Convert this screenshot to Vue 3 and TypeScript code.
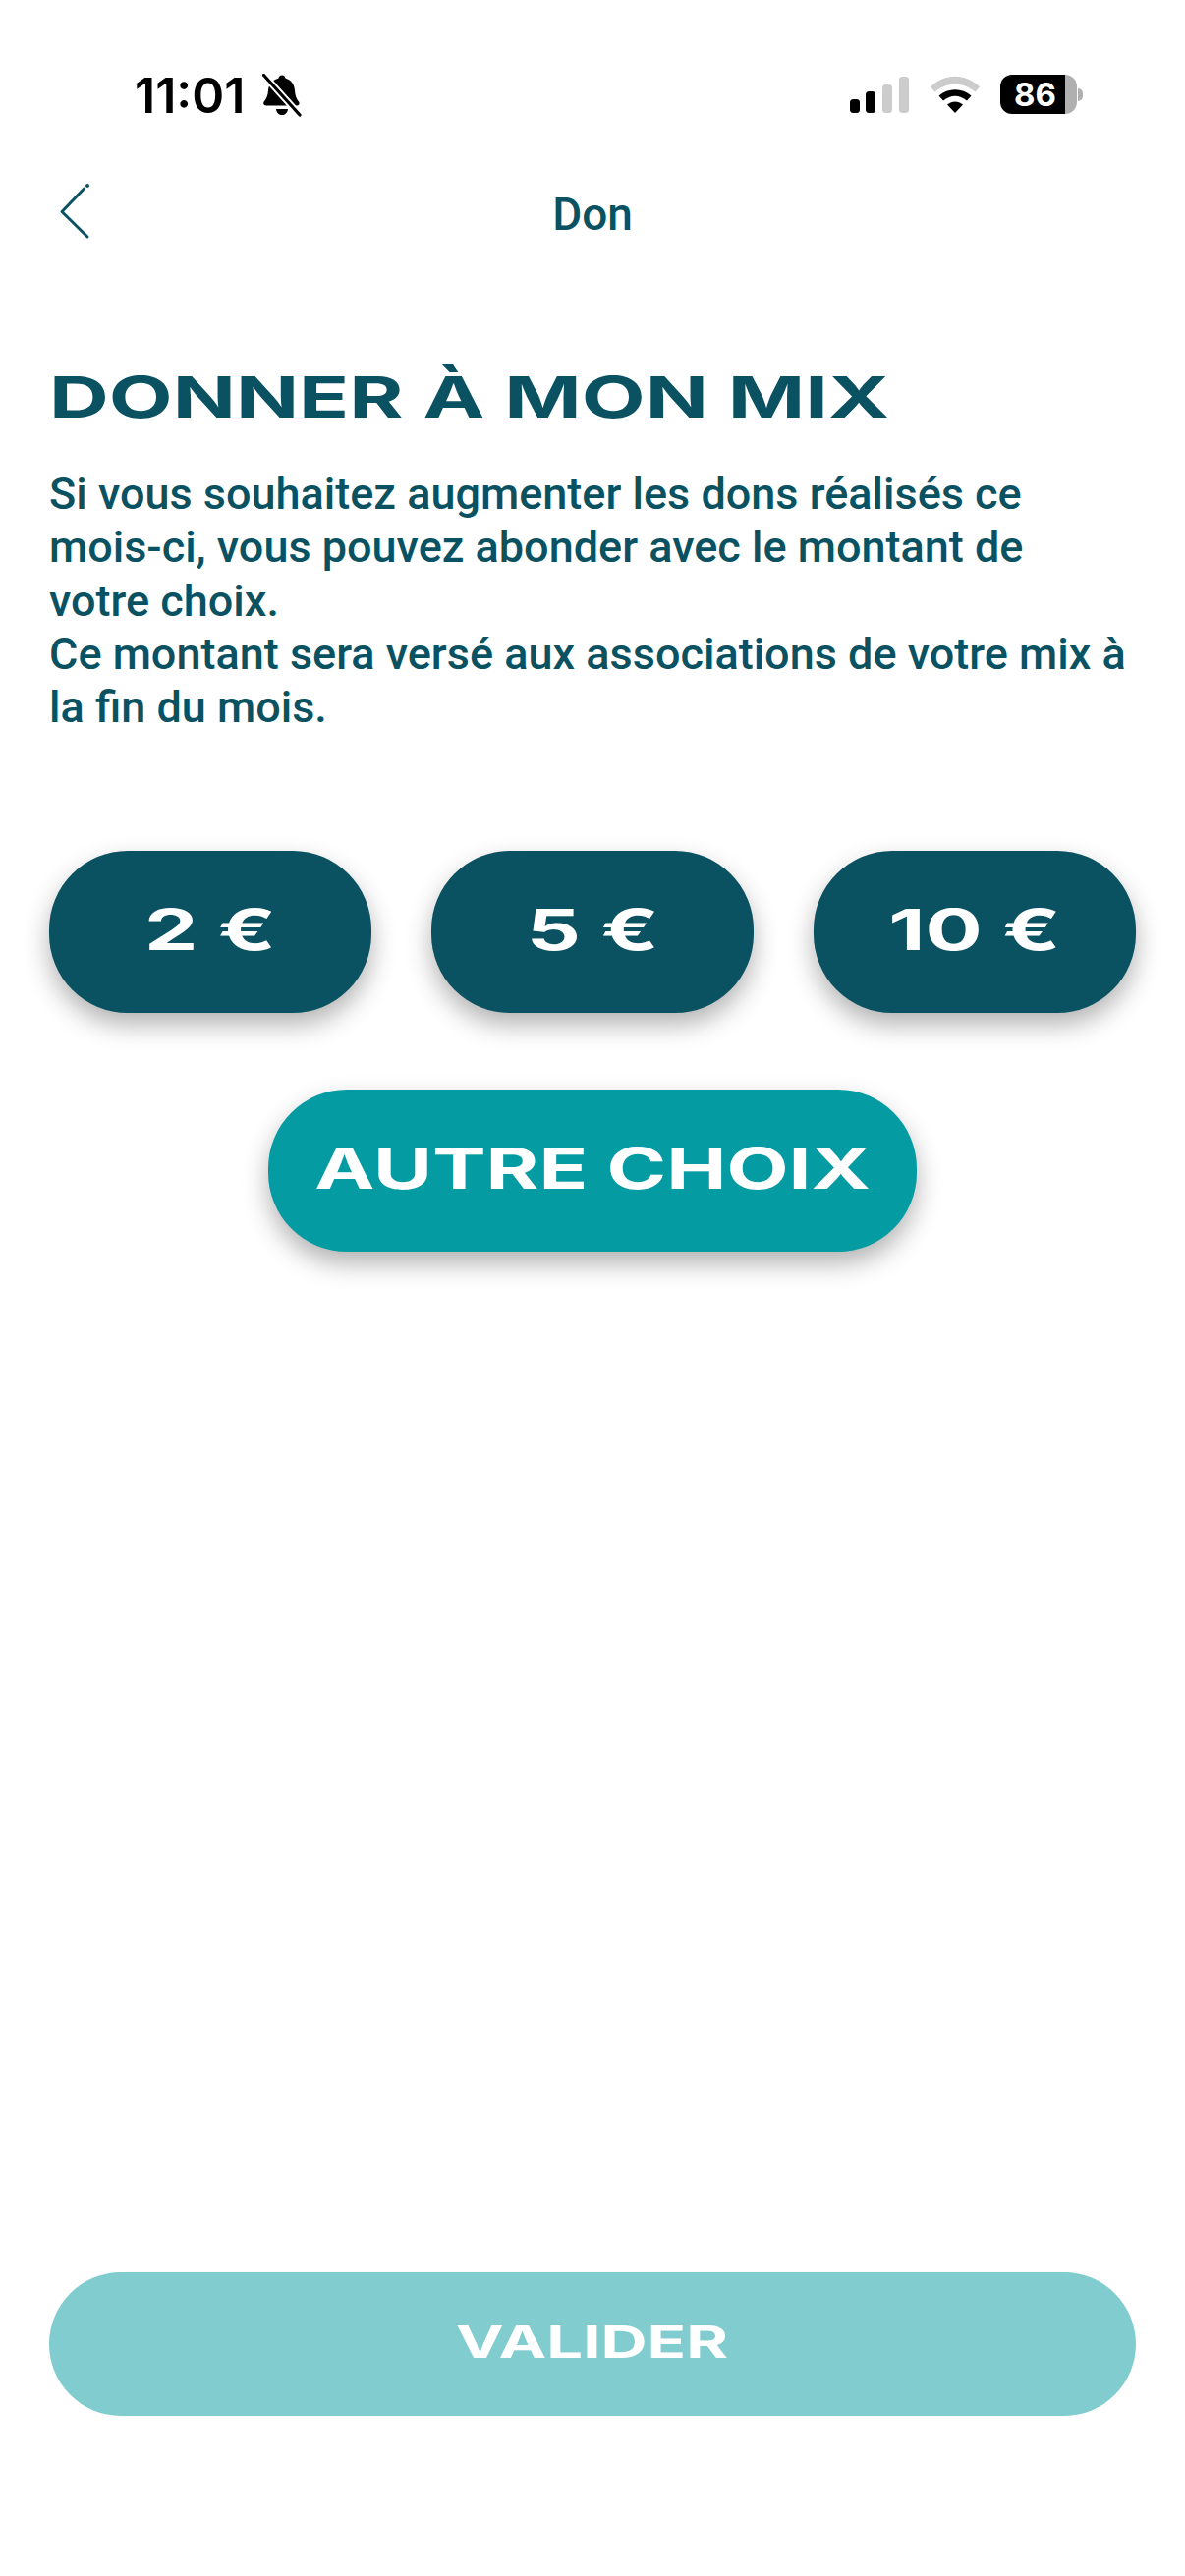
<script setup lang="ts">
const amounts: string[] = ['2 €', '5 €', '10 €']
const lines: string[] = [
  'Si vous souhaitez augmenter les dons réalisés ce',
  'mois-ci, vous pouvez abonder avec le montant de',
  'votre choix.',
  'Ce montant sera versé aux associations de votre mix à',
  'la fin du mois.'
]
</script>

<template>
  <div class="page">
    <header class="status">
      <div class="status-left">
        <span class="time">11:01</span>
        <svg class="bell" width="40" height="44" viewBox="0 0 40 44">
          <path d="M20 1.500c2 0 3.400 1.400 3.600 3.200 6 1.500 9 6.500 9.400 12.300.3 5 1.500 8.500 4 11.500.9 1.300 1 3.500-1.500 4H4c-3-.3-3.400-2.700-2-4.500 2.500-3 3.600-6 4-11C6.500 11 10 6 16.400 4.700 16.600 2.900 18 1.500 20 1.500z" fill="#000"/>
          <path d="M14 36h12c-.6 4-3 6-6 6s-5.400-2-6-6z" fill="#000"/>
          <path d="M1.500 1.500 38 42" stroke="#fff" stroke-width="7"/>
          <path d="M1.500 1.500 38 42" stroke="#000" stroke-width="3.200" stroke-linecap="round"/>
        </svg>
      </div>
      <div class="status-right">
        <svg width="61" height="37" viewBox="0 0 61 37">
          <rect x="0" y="23" width="10" height="14" rx="3.500" fill="#000"/>
          <rect x="16" y="15" width="10" height="22" rx="3.500" fill="#000"/>
          <rect x="33" y="8" width="10" height="29" rx="3.500" fill="#ccc"/>
          <rect x="50" y="0" width="10" height="37" rx="3.500" fill="#ccc"/>
        </svg>
        <svg class="wifi" width="50" height="38" viewBox="0 0 50 38">
          <path d="M0 11.500C14-3 36-3 50 11.500L45.500 16.500C33 6 17 6 4.500 16.500z" fill="#ccc"/>
          <path d="M8.500 20.500C18 12 32 12 41.500 20.500L37 25.500C29 19 21 19 13 25.500z" fill="#000"/>
          <path d="M17 29.500C22 25.500 28 25.500 33 29.500L25 38z" fill="#000"/>
        </svg>
        <div class="battery">
          <div class="battery-body"><span class="battery-level">86</span></div>
          <span class="battery-cap"></span>
        </div>
      </div>
    </header>

    <nav class="nav">
      <svg class="back" width="32" height="58" viewBox="0 0 32 58">
        <path d="M25.500 6 3 29.500 29 55" fill="none" stroke="#0a5261" stroke-width="3" stroke-linecap="round" stroke-linejoin="round"/>
        <circle cx="29" cy="3" r="2" fill="#0a5261"/>
      </svg>
      <span class="nav-title">Don</span>
    </nav>

    <main class="content">
      <h1 class="title">DONNER À MON MIX</h1>
      <p class="intro">
        <span v-for="line in lines" :key="line" class="intro-line">{{ line }}</span>
      </p>

      <div class="amounts">
        <button v-for="a in amounts" :key="a" class="pill amount"><span class="wide">{{ a }}</span></button>
      </div>
      <button class="pill other"><span class="wide wide-lg">AUTRE CHOIX</span></button>
    </main>

    <footer class="footer">
      <button class="validate"><span class="validate-label">VALIDER</span></button>
    </footer>
  </div>
</template>

<style>
html, body { margin: 0; background: #fff; }
</style>

<style scoped>
.page {
  width: 1206px;
  height: 2622px;
  background: #fff;
  display: flex;
  flex-direction: column;
  font-family: Roboto, "Noto Sans", sans-serif;
  color: #0a5261;
  overflow: hidden;
}
.status {
  height: 76px;
  padding: 69px 104px 0 137px;
  display: flex;
  justify-content: space-between;
  align-items: flex-start;
  flex: none;
}
.status-left { display: flex; align-items: center; gap: 18px; height: 56px; }
.time {
  font-family: Inter, sans-serif;
  font-size: 50px;
  font-weight: 600;
  line-height: 56px;
  color: #000;
}
.bell { flex: none; }
.status-right { display: flex; align-items: center; gap: 21px; height: 56px; margin-top: -1px; }
.battery { display: flex; align-items: center; gap: 1px; }
.battery-body {
  width: 78px;
  height: 40px;
  border-radius: 12px;
  background: linear-gradient(90deg, #000 0 84%, #b0b0b0 84%);
  display: flex;
  align-items: center;
}
.battery-level {
  font-family: Inter, sans-serif;
  font-size: 33px;
  font-weight: 700;
  color: #fff;
  margin-left: 14px;
  line-height: 40px;
}
.battery-cap {
  width: 5px;
  height: 13px;
  background: #b0b0b0;
  border-radius: 0 7px 7px 0;
}
.nav {
  margin-top: 41px;
  height: 58px;
  padding: 0 60px;
  position: relative;
  display: flex;
  justify-content: center;
  align-items: center;
  flex: none;
}
.back { position: absolute; left: 60px; top: 0; }
.nav-title { font-size: 46px; line-height: 58px; margin-top: 6px; font-weight: 500; }
.content { padding: 0 50px; flex: none; }
.title {
  margin: 125px 0 0;
  font-family: Inter, sans-serif;
  font-weight: 700;
  font-size: 58px;
  line-height: 70px;
  white-space: nowrap;
  transform: scaleX(1.452);
  transform-origin: left center;
}
.intro {
  margin: 37px 0 0;
  font-size: 45px;
  font-weight: 500;
  line-height: 54.300px;
}
.intro-line { display: block; white-space: nowrap; }
.amounts {
  margin-top: 119px;
  display: flex;
  justify-content: space-between;
}
.pill {
  border: 0;
  height: 165px;
  border-radius: 80px;
  color: #fff;
  box-shadow: 0 12px 26px rgba(0, 0, 0, 0.3);
  padding: 0 0 6px;
  display: flex;
  align-items: center;
  justify-content: center;
  font-family: Inter, sans-serif;
  font-weight: 700;
}
.amount { width: 328px; background: #0a5261; }
.other { width: 660px; margin: 78px auto 0; background: #059ba3; }
.wide { display: inline-block; font-size: 58px; transform: scaleX(1.49); white-space: pre; }
.wide-lg { white-space: nowrap; transform: scaleX(1.413); }
.footer { margin-top: auto; padding: 0 50px 163px; }
.validate {
  width: 100%;
  height: 146px;
  border: 0;
  border-radius: 73px;
  background: #80cccf;
  display: flex;
  align-items: center;
  justify-content: center;
  padding: 0 0 5px;
}
.validate-label {
  display: inline-block;
  font-family: Inter, sans-serif;
  font-weight: 700;
  font-size: 45px;
  color: #fff;
  transform: scaleX(1.45);
}
</style>
